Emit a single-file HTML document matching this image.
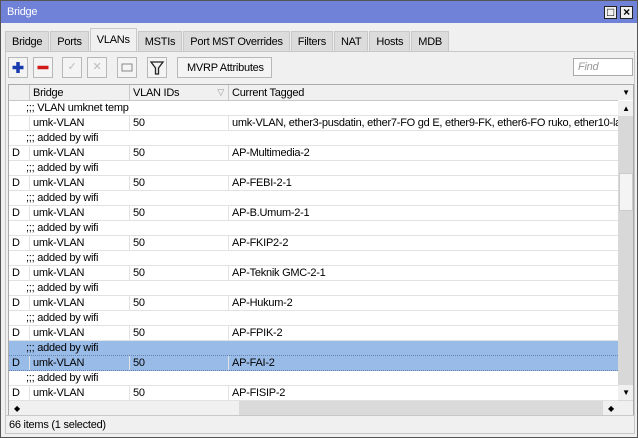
<!DOCTYPE html>
<html><head><style>
*{box-sizing:border-box;margin:0;padding:0}
body{width:638px;height:438px;background:#f0f0f0;font-family:"Liberation Sans",Arial,sans-serif;font-size:11px;color:#000;position:relative;overflow:hidden;letter-spacing:-0.25px}
.win{position:absolute;left:0;top:0;width:638px;height:438px;border:1px solid #555;background:#f0f0f0}
.title{position:absolute;left:0;top:0;width:636px;height:22px;background:#7081d8;color:#fff;font-size:11px;padding:5px 0 0 6px}
.tb{position:absolute;top:5px;width:13px;height:13px;background:#f0f0f0;border:1px solid #222;font-size:12px;line-height:11px;text-align:center;font-weight:bold}
.tabs{position:absolute;left:4px;top:30px;height:20px;display:flex}
.tab{height:20px;background:#dcdcdc;border:1px solid #c8c8c8;border-bottom:none;padding:4px 6px 0;margin-right:1px}
.tab.act{background:#f0f0f0;height:23px;margin-top:-3px;padding-top:5px}
.bar{position:absolute;left:4px;top:50px;width:630px;height:382px;border:1px solid #c8c8c8;border-bottom:none;background:#f0f0f0}
.btn{position:absolute;top:56px;height:21px;width:20px;border:1px solid #b8b8b8;background:#f4f4f4}
.grid{position:absolute;left:7px;top:83px;width:626px;height:332px;border:1px solid #aaa;background:#fff;overflow:hidden}
.hdr{position:absolute;left:0;top:0;height:16px;width:609px;background:#f0f0f0;border-bottom:1px solid #c8c8c8}
.hdr div{position:absolute;top:0;height:15px;padding:2px 0 0 3px;border-left:1px solid #c8c8c8}
.row{position:absolute;left:0;width:609px;height:15px;border-bottom:1px solid #e2e2e2}
.row div{position:absolute;top:0;height:14px;padding:1px 0 0 3px;white-space:nowrap;overflow:hidden}
.d .c1,.d .c2,.d .c3{border-left:1px solid #e2e2e2}
.sel{background:#99bbe8;border-bottom:1px dotted #6680aa}
.c0{left:0;width:20px}.c1{left:20px;width:100px}.c2{left:120px;width:99px}.c3{left:219px;width:390px}
.cm{left:14px}
.vs{position:absolute;left:609px;top:16px;width:16px;height:300px;background:#d8d8d8}
.arr{position:absolute;width:16px;height:15px;background:#f0f0f0;font-size:8px;text-align:center;line-height:15px}
.hs{position:absolute;left:0;top:316px;width:609px;height:15px;background:#dadada}
.status{position:absolute;left:4px;top:414px;width:630px;height:19px;border:1px solid #c8c8c8;padding:3px 0 0 3px;background:#f0f0f0}
</style></head><body>
<div class="win">
<div class="title">Bridge</div>
<div class="tb" style="left:603px">□</div><div class="tb" style="left:619px">×</div>
<div class="bar"></div>
<div class="tabs">
<div class="tab">Bridge</div><div class="tab">Ports</div><div class="tab act">VLANs</div><div class="tab">MSTIs</div><div class="tab">Port MST Overrides</div><div class="tab">Filters</div><div class="tab">NAT</div><div class="tab">Hosts</div><div class="tab">MDB</div>
</div>
<div class="btn" style="left:7px"><svg width="18" height="19"><path d="M9 4v11M3.5 9.5h11" stroke="#1a3ab0" stroke-width="3.5"/></svg></div>
<div class="btn" style="left:32px"><svg width="18" height="19"><path d="M3.5 9.5h11" stroke="#d01a1a" stroke-width="3.5"/></svg></div>
<div class="btn" style="left:61px;color:#bbb;text-align:center;line-height:19px">✓</div>
<div class="btn" style="left:86px;color:#bbb;text-align:center;line-height:19px">✕</div>
<div class="btn" style="left:116px"><svg width="18" height="19"><rect x="4" y="6" width="10" height="7" fill="none" stroke="#888"/></svg></div>
<div class="btn" style="left:146px"><svg width="18" height="19"><path d="M3 4h12l-4.5 6v6h-3v-6z" fill="none" stroke="#222" stroke-width="1.3"/></svg></div>
<div class="btn" style="left:176px;width:95px;padding:4px 0 0 9px">MVRP Attributes</div>
<div style="position:absolute;left:572px;top:57px;width:60px;height:18px;border:1px solid #aaa;background:#fff;color:#999;font-style:italic;padding:2px 4px">Find</div>
<div class="grid">
<div class="hdr"><div style="left:0;width:20px;border:none"></div><div style="left:20px;width:100px">Bridge</div><div style="left:120px;width:99px">VLAN IDs<span style="position:absolute;right:4px;color:#999;font-size:9px">▽</span></div><div style="left:219px;width:390px">Current Tagged</div></div>
<div id="rows"></div>
<div class="vs"><div class="arr" style="top:0">▲</div><div style="position:absolute;left:1px;top:72px;width:14px;height:38px;background:#f4f4f4;border:1px solid #ccc"></div><div class="arr" style="top:284px">▼</div></div>
<div class="arr" style="left:609px;top:0">▼</div>
<div class="hs"><div class="arr" style="left:0;top:0">◆</div><div style="position:absolute;left:16px;top:0;width:214px;height:15px;background:#f0f0f0"></div><div class="arr" style="left:594px;top:0">◆</div></div>
<div style="position:absolute;left:609px;top:316px;width:16px;height:15px;background:#f0f0f0"></div>
</div>
<div class="status">66 items (1 selected)</div>
</div>
<script>
var d=[["c",";;; VLAN umknet temp"],["","umk-VLAN","50","umk-VLAN, ether3-pusdatin, ether7-FO gd E, ether9-FK, ether6-FO ruko, ether10-lab"],
["c",";;; added by wifi"],["D","umk-VLAN","50","AP-Multimedia-2"],["c",";;; added by wifi"],["D","umk-VLAN","50","AP-FEBI-2-1"],
["c",";;; added by wifi"],["D","umk-VLAN","50","AP-B.Umum-2-1"],["c",";;; added by wifi"],["D","umk-VLAN","50","AP-FKIP2-2"],
["c",";;; added by wifi"],["D","umk-VLAN","50","AP-Teknik GMC-2-1"],["c",";;; added by wifi"],["D","umk-VLAN","50","AP-Hukum-2"],
["c",";;; added by wifi"],["D","umk-VLAN","50","AP-FPIK-2"],["c",";;; added by wifi",1],["D","umk-VLAN","50","AP-FAI-2",1],
["c",";;; added by wifi"],["D","umk-VLAN","50","AP-FISIP-2"]];
var h="";d.forEach(function(r,i){var t=16+i*15;
if(r[0]=="c")h+='<div class="row'+(r[2]?' sel':'')+'" style="top:'+t+'px"><div class="cm">'+r[1]+'</div></div>';
else h+='<div class="row d'+(r[4]?' sel':'')+'" style="top:'+t+'px"><div class="c0">'+r[0]+'</div><div class="c1">'+r[1]+'</div><div class="c2">'+r[2]+'</div><div class="c3">'+r[3]+'</div></div>';});
document.getElementById("rows").innerHTML=h;
</script>
</body></html>
